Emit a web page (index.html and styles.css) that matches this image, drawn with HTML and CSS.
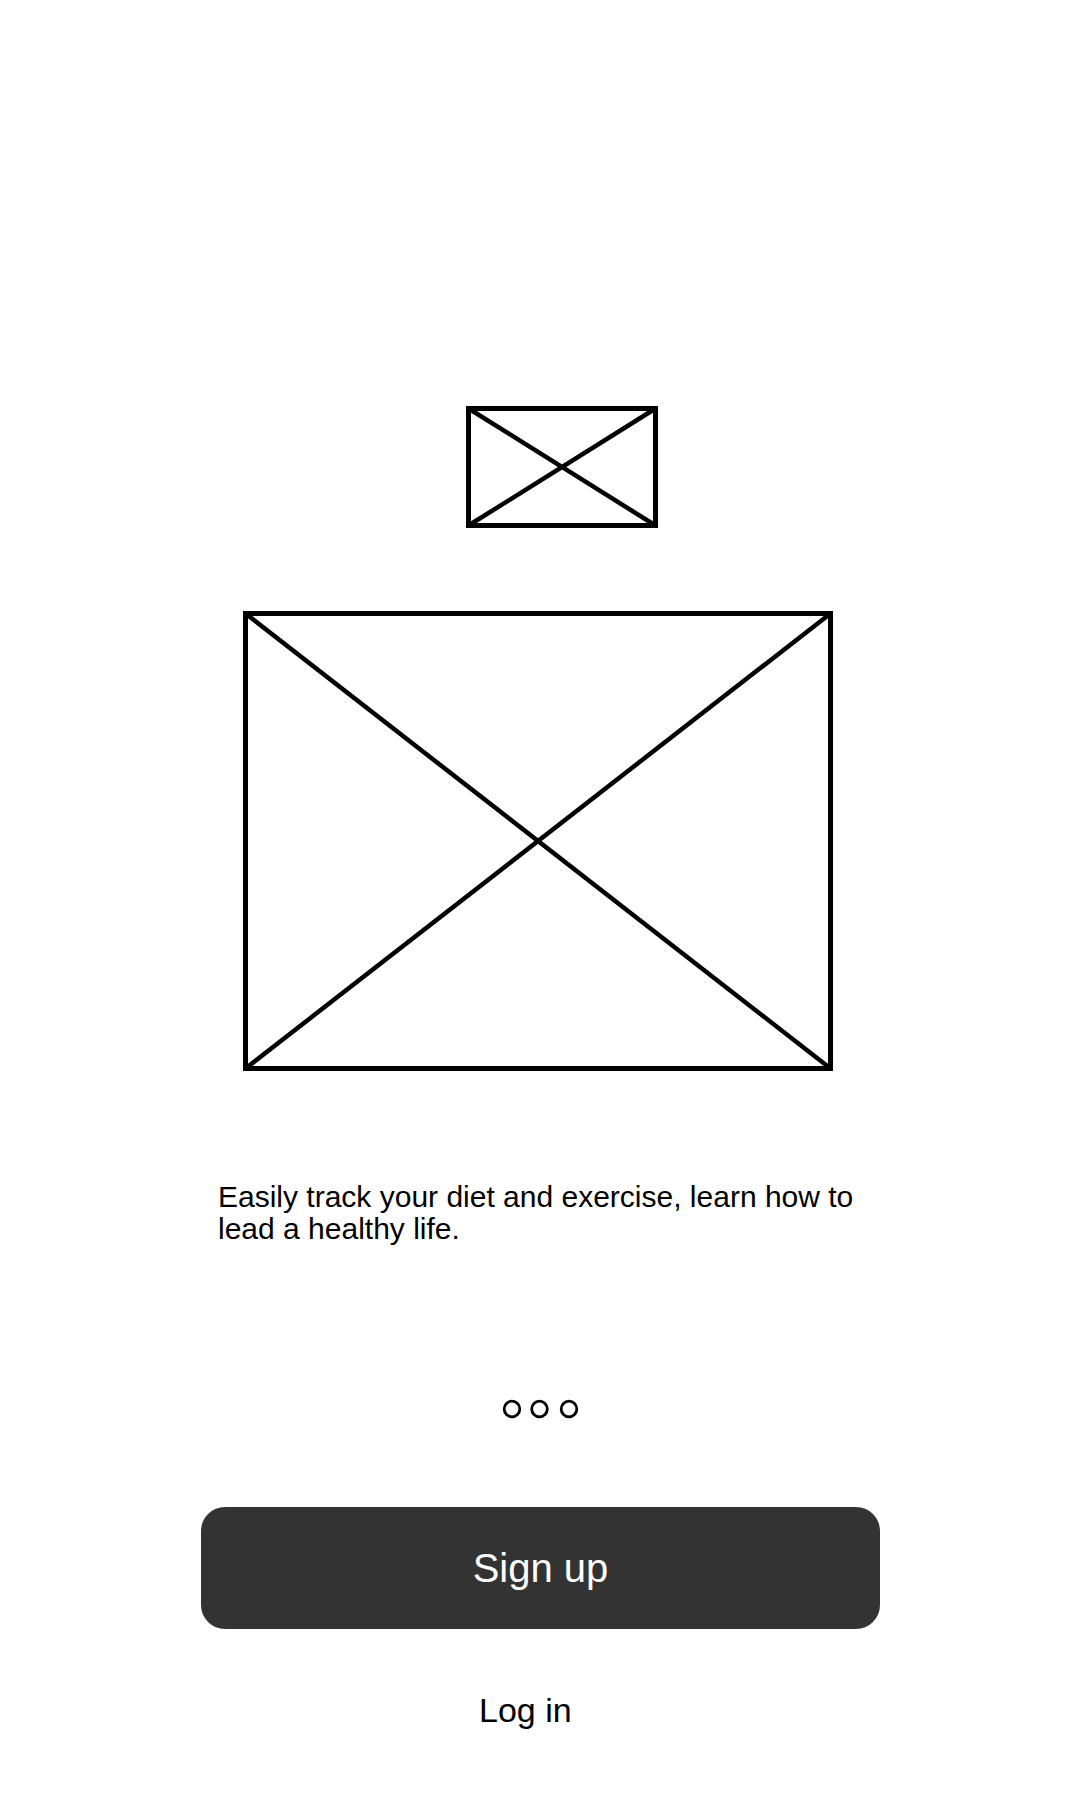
FILE: index.html
```html
<!DOCTYPE html>
<html lang="en">
<head>
<meta charset="utf-8">
<title>Welcome</title>
<link rel="stylesheet" href="styles.css">
</head>
<body>
<main class="screen">
  <svg class="thumb" viewBox="0 0 192 122" aria-label="logo placeholder">
    <rect x="2.5" y="2.5" width="187" height="117" fill="none" stroke="#000" stroke-width="5"/>
    <line x1="2.5" y1="2.5" x2="189.5" y2="119.5" stroke="#000" stroke-width="4.5"/>
    <line x1="189.5" y1="2.5" x2="2.5" y2="119.5" stroke="#000" stroke-width="4.5"/>
  </svg>
  <svg class="hero" viewBox="0 0 590 460" aria-label="image placeholder">
    <rect x="2.5" y="2.5" width="585" height="455" fill="none" stroke="#000" stroke-width="5"/>
    <line x1="2.5" y1="2.5" x2="587.5" y2="457.5" stroke="#000" stroke-width="4.5"/>
    <line x1="587.5" y1="2.5" x2="2.5" y2="457.5" stroke="#000" stroke-width="4.5"/>
  </svg>
  <p class="tagline">Easily track your diet and exercise, learn how to lead a healthy life.</p>
  <svg class="dots" viewBox="0 0 80 22" aria-label="page indicator">
    <circle cx="12" cy="11" r="7.8" fill="none" stroke="#000" stroke-width="2.8"/>
    <circle cx="39.5" cy="11" r="7.8" fill="none" stroke="#000" stroke-width="2.8"/>
    <circle cx="69" cy="11" r="7.8" fill="none" stroke="#000" stroke-width="2.8"/>
  </svg>
  <button class="signup" type="button">Sign up</button>
  <a class="login" href="#">Log in</a>
</main>
</body>
</html>
```

FILE: styles.css
```css
html, body {
  margin: 0;
  padding: 0;
  background: #fff;
}

body {
  width: 1080px;
  font-family: "Liberation Sans", Arial, sans-serif;
  color: #000;
}

.screen {
  display: flex;
  flex-direction: column;
  align-items: flex-start;
  padding-top: 406px;
}

.thumb {
  display: block;
  width: 192px;
  height: 122px;
  margin-left: 466px;
}

.hero {
  display: block;
  width: 590px;
  height: 460px;
  margin-top: 83px;
  margin-left: 243px;
}

.tagline {
  margin: 110px 0 0 218px;
  width: 644px;
  font-size: 30px;
  line-height: 32px;
}

.dots {
  display: block;
  width: 80px;
  height: 22px;
  margin-top: 153px;
  margin-left: 500px;
}

.signup {
  display: flex;
  align-items: center;
  justify-content: center;
  margin: 87px 0 0 201px;
  width: 679px;
  height: 122px;
  padding: 0;
  border: none;
  border-radius: 24px;
  background: #333333;
  color: #fff;
  font-family: "Liberation Sans", Arial, sans-serif;
  font-size: 40px;
}

.login {
  margin: 62px 0 0 479px;
  font-size: 34px;
  color: #000;
  text-decoration: none;
}
```
